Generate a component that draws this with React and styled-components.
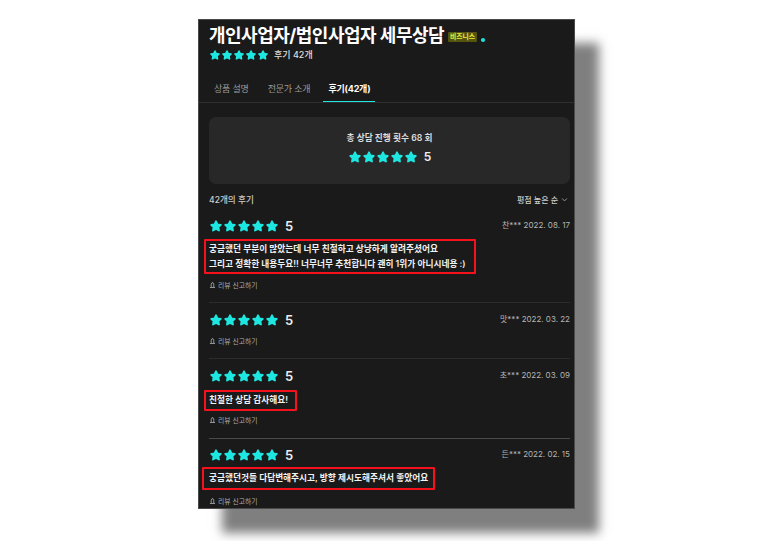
import styled, { createGlobalStyle } from 'styled-components'

const GlobalStyle = createGlobalStyle`
    html, body {
        margin: 0;
        background: #fff;
    }

    body {
        font-family: Inter, "Noto Sans CJK KR", sans-serif;
    }
`

const Page = styled.div`
    width: 773px;
    height: 541px;
    padding: 19px 0 0 198px;
    box-sizing: border-box;
    overflow: hidden;
`

const Panel = styled.div`
    box-sizing: border-box;
    width: 377px;
    height: 490px;
    overflow: hidden;
    border: 1px solid #4a4a4a;
    background: #1a1a1a;
    color: #fff;
    box-shadow: 24px 24px 10px rgba(0, 0, 0, 0.5);
`

const Header = styled.div`
    padding: 3px 10px 0;
`

const TitleRow = styled.div`
    display: flex;
    align-items: center;
    height: 25px;
`

const Title = styled.h1`
    margin: 0;
    font-size: 18px;
    line-height: 25px;
    font-weight: 700;
    letter-spacing: -0.5px;
    white-space: nowrap;
`

const Badge = styled.span`
    margin: 2px 0 0 4px;
    padding: 0 2px;
    border-radius: 1px;
    background: #55550f;
    color: #e8f03c;
    font-size: 6.8px;
    line-height: 10px;
    font-weight: 700;
`

const Dot = styled.span`
    width: 4px;
    height: 4px;
    margin: 8px 0 0 4px;
    border-radius: 50%;
    background: #1ee6e0;
`

const RatingRow = styled.div`
    display: flex;
    align-items: center;
    gap: ${({ $gap }) => $gap}px;
`

const StarList = styled.span`
    display: inline-flex;
`

const StarIcon = styled.svg`
    display: block;
    width: ${({ $size }) => $size}px;
    height: ${({ $size }) => $size}px;
    fill: #1ee6e0;
    stroke: #1ee6e0;
    stroke-width: 3.2;
    stroke-linejoin: round;
`

const RatingText = styled.span`
    font-size: 9px;
    line-height: 14px;
    font-weight: 500;
    color: #ddd;
`

const Score = styled.span`
    font-size: ${({ $size }) => $size}px;
    font-weight: 600;
    color: #eee;
`

const Tabs = styled.div`
    display: flex;
    height: 31px;
    margin-top: 9px;
    padding-left: 10px;
    gap: 9px;
    border-bottom: 1px solid #303030;
`

const Tab = styled.div`
    box-sizing: border-box;
    height: 31px;
    padding: 11px 5px 0;
    font-size: 9px;
    line-height: 14px;
    letter-spacing: -0.2px;
    font-weight: 400;
    color: #9a9a9a;
`

const ActiveTab = styled(Tab)`
    margin-left: -1px;
    font-weight: 700;
    color: #fff;
    border-bottom: 1px solid #1ee6e0;
`

const Content = styled.div`
    padding: 14px 4px 0 10px;
`

const Summary = styled.div`
    display: flex;
    flex-direction: column;
    align-items: center;
    height: 67px;
    padding-top: 15px;
    box-sizing: border-box;
    border-radius: 7px;
    background: #282828;
`

const SummaryTitle = styled.div`
    font-size: 8.7px;
    line-height: 13px;
    font-weight: 600;
    color: #ddd;
    margin-bottom: 4px;
`

const ListHeader = styled.div`
    display: flex;
    justify-content: space-between;
    align-items: center;
    margin-top: 8px;
    height: 14px;
    font-size: 8.6px;
    font-weight: 500;
    color: #ccc;
`

const Sort = styled.span`
    display: flex;
    align-items: center;
    gap: 3px;
    font-size: 8px;
    padding-right: 2px;
`

const Review = styled.div`
    padding: ${({ $top }) => $top}px 0 ${({ $bottom }) => $bottom}px;
    border-bottom: 1px solid ${({ $line }) => $line || '#2c2c2c'};
`

const ReviewTop = styled.div`
    display: flex;
    justify-content: space-between;
    align-items: flex-start;
    height: 22px;
`

const Meta = styled.span`
    padding-top: 1px;
    font-size: 8px;
    line-height: 13px;
    color: #b5b5b5;
`

const Highlight = styled.div`
    display: block;
    width: fit-content;
    margin-top: ${({ $top }) => $top || 0}px;
    margin-left: ${({ $left }) => $left}px;
    padding: ${({ $padding }) => $padding};
    border: 2px solid #f5121c;
    border-radius: 1px;
    font-size: 8.7px;
    line-height: 15px;
    font-weight: 600;
    color: #f2f2f2;
    white-space: nowrap;
`

const ReportLink = styled.div`
    display: flex;
    align-items: center;
    gap: 3px;
    margin-top: ${({ $top }) => $top}px;
    height: 12px;
    padding-left: 1px;
    font-size: 6.8px;
    color: #aaa;
`

const Star = ({ size }) => (
    <StarIcon $size={size} viewBox="0 0 24 24">
        <path d="M12 4l2.5 5.2 5.7.8-4.1 4 1 5.7-5.1-2.7-5.1 2.7 1-5.7-4.1-4 5.7-.8z" />
    </StarIcon>
)

const Stars = ({ size }) => (
    <StarList>
        {[0, 1, 2, 3, 4].map((i) => <Star key={i} size={size} />)}
    </StarList>
)

const SirenIcon = () => (
    <svg width="5" height="6" viewBox="0 0 5 6" fill="none" stroke="#b5b5b5" strokeWidth="0.8">
        <path d="M1.2 5V2.2a1.3 1.3 0 0 1 2.6 0V5" />
        <path d="M0 5.5h5M2.5 0v.6" />
    </svg>
)

const Report = ({ top }) => (
    <ReportLink $top={top}>
        <SirenIcon />
        리뷰 신고하기
    </ReportLink>
)

const ReviewHead = ({ meta }) => (
    <ReviewTop>
        <RatingRow $gap={6}>
            <Stars size={14} />
            <Score $size={13}>5</Score>
        </RatingRow>
        <Meta>{meta}</Meta>
    </ReviewTop>
)

const App = () => (
    <Page>
        <GlobalStyle />
        <Panel>
            <Header>
                <TitleRow>
                    <Title>개인사업자/법인사업자 세무상담</Title>
                    <Badge>비즈니스</Badge>
                    <Dot />
                </TitleRow>
                <RatingRow $gap={5}>
                    <Stars size={12} />
                    <RatingText>후기 42개</RatingText>
                </RatingRow>
            </Header>
            <Tabs>
                <Tab>상품 설명</Tab>
                <Tab>전문가 소개</Tab>
                <ActiveTab>후기(42개)</ActiveTab>
            </Tabs>
            <Content>
                <Summary>
                    <SummaryTitle>총 상담 진행 횟수 68 회</SummaryTitle>
                    <RatingRow $gap={6}>
                        <Stars size={14} />
                        <Score $size={12}>5</Score>
                    </RatingRow>
                </Summary>
                <ListHeader>
                    <span>42개의 후기</span>
                    <Sort>
                        평점 높은 순
                        <svg width="7" height="7" viewBox="0 0 10 10" fill="none" stroke="#aaa" strokeWidth="1.2">
                            <path d="M1.5 3.5L5 7l3.5-3.5" />
                        </svg>
                    </Sort>
                </ListHeader>
                <Review $top={12} $bottom={11}>
                    <ReviewHead meta="찬*** 2022. 08. 17" />
                    <Highlight $top={-1} $left={-5} $padding="1px 8px 0 3px">
                        궁금했던 부분이 많았는데 너무 친절하고 상냥하게 알려주셨어요
                        <br />
                        그리고 정확한 내용두요!! 너무너무 추천합니다 괜히 1위가 아니시네용 :)
                    </Highlight>
                    <Report top={5} />
                </Review>
                <Review $top={9} $bottom={11}>
                    <ReviewHead meta="맛*** 2022. 03. 22" />
                    <Report top={1} />
                </Review>
                <Review $top={9} $bottom={12} $line="#4a4a4a">
                    <ReviewHead meta="초*** 2022. 03. 09" />
                    <Highlight $left={-5} $padding="1px 7px 1px 3px">친절한 상담 감사해요!</Highlight>
                    <Report top={3} />
                </Review>
                <Review $top={8} $bottom={10}>
                    <ReviewHead meta="든*** 2022. 02. 15" />
                    <Highlight $top={-2} $left={-7} $padding="2px 5px 2px 5px">궁금했던것들 다답변해주시고, 방향 제시도해주셔서 좋았어요</Highlight>
                    <Report top={5} />
                </Review>
            </Content>
        </Panel>
    </Page>
)

export default App
